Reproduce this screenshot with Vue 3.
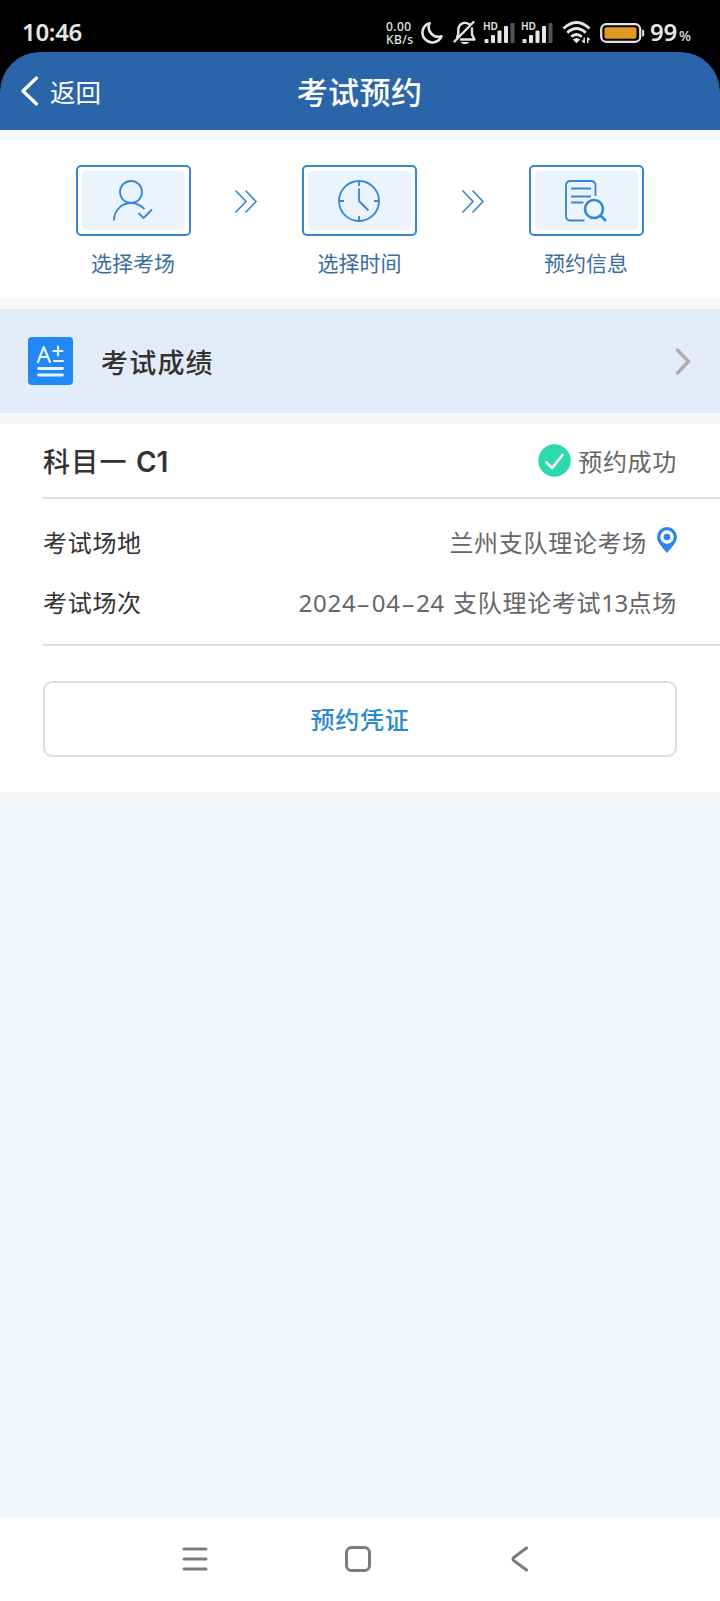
<template>
    <div class="phone">
        <div class="status-bar">
            <span class="clock">10:46</span>
            <div class="status-icons">
                <div class="speed"><span>0.00</span><span>KB/s</span></div>
                <svg class="moon" width="22" height="24" viewBox="0 0 22 24">
                    <path d="M8.6 2.2A9.8 9.8 0 1 0 20.4 15.2A9.6 9.6 0 0 1 8.6 2.2Z" />
                </svg>
                <svg class="bell" width="24" height="25" viewBox="0 0 24 25">
                    <path d="M16.5 4.2C10.5 .8 5.3 4.5 5.3 10V14.5L4 17M19 8.5V14.5L21.5 19.5H8" />
                    <path d="M1.5 21.5L20.5 2" />
                    <path class="fill" d="M7.5 22H16.5Q12 26.5 7.5 22Z" />
                </svg>
                <svg v-for="n in 2" :key="n" class="signal" width="32" height="26" viewBox="0 -4 32 26">
                    <text x="0" y="7.5" textLength="15" lengthAdjust="spacingAndGlyphs">HD</text>
                    <rect x="1.5" y="17" width="4" height="4" rx="1" />
                    <rect x="8" y="13" width="4" height="8" rx="1" />
                    <rect x="14.5" y="8.5" width="4" height="12.5" rx="1" />
                    <rect x="21" y="4" width="4" height="17" rx="1" />
                    <rect class="dim" x="27.5" y="1" width="4" height="20" rx="1" />
                </svg>
                <svg class="wifi" width="30" height="23" viewBox="0 0 30 23">
                    <path d="M1.5 7.5Q14.5 -4.5 27.5 7.5M5.3 11.7Q14.5 3.3 23.7 11.7M9.2 15.8Q14.5 11 19.8 15.8" />
                    <path class="fill" d="M10.8 18.5Q14.5 15.5 18.2 18.5L14.5 22.3Z" />
                    <path class="thin" d="M22.2 16.5V21.5L20.2 19.5M25.7 22V17L27.7 19" />
                </svg>
                <svg class="battery" width="45" height="20" viewBox="0 0 45 20">
                    <rect class="shell" x="1.2" y="1.2" width="39" height="17.6" rx="5" />
                    <rect class="charge" x="4.5" y="4.3" width="32" height="11.4" rx="2" />
                    <path class="tip" d="M42.2 6.5Q44.2 6.5 44.2 8V12Q44.2 13.5 42.2 13.5Z" />
                </svg>
                <span class="level">99</span>
                <span class="percent">%</span>
            </div>
        </div>

        <div class="header-wrap">
            <header class="header">
                <div class="back" @click="goBack">
                    <svg width="18" height="30" viewBox="0 0 18 30">
                        <path d="M15.5 2L2 15L15.5 28" />
                    </svg>
                    <span>返回</span>
                </div>
                <h1>考试预约</h1>
            </header>
        </div>

        <section class="steps">
            <template v-for="(step, index) in steps" :key="step.label">
                <div class="step">
                    <div class="step-box">
                        <div class="step-inner">
                            <svg width="42" height="42" viewBox="0 0 42 42">
                                <template v-if="step.icon === 'user'">
                                    <circle cx="19" cy="12" r="11" />
                                    <path d="M2 40.5C2 30 10 23 19 23C24.5 23 29 25.5 32.5 29M26.5 33L31.5 38L40 29.5" />
                                </template>
                                <template v-else-if="step.icon === 'clock'">
                                    <circle cx="21" cy="21" r="20" />
                                    <path d="M21 1V6M21 36V41M1 21H6M36 21H41M21 8.5V21L30.5 30.5" />
                                </template>
                                <template v-else>
                                    <path d="M30.5 16V5.500Q30.5 1 26 1H5.500Q1 1 1 5.500V36Q1 40.5 5.500 40.500H19.5" />
                                    <path d="M6 8.5H26M6 16.5H26M6 22.5H18.5" />
                                    <circle class="lens" cx="29" cy="29" r="9" />
                                    <path class="lens" d="M35 35L41 41" />
                                </template>
                            </svg>
                        </div>
                    </div>
                    <div class="step-label">{{ step.label }}</div>
                </div>
                <svg v-if="index < steps.length - 1" class="step-arrow" width="22" height="23" viewBox="0 0 22 23">
                    <path d="M1 1L11 11.5L1 22M11 1L21 11.5L11 22" />
                </svg>
            </template>
        </section>

        <section class="score">
            <svg class="score-icon" width="45" height="48" viewBox="0 0 45 48">
                <rect width="45" height="48" rx="4" />
                <path d="M10 25L15.7 10L22 25M12 20H20M30 9.5V18.500M25.5 14H34.5M26 24H35" />
                <path class="thick" d="M10.5 31.5H34.5M10.5 38H34.5" />
            </svg>
            <span class="score-title">考试成绩</span>
            <svg class="score-arrow" width="16" height="27" viewBox="0 0 16 27">
                <path d="M2.5 2L13.500 13.5L2.5 25" />
            </svg>
        </section>

        <section class="card">
            <div class="card-head">
                <span class="subject">科目一 <b>C1</b></span>
                <div class="state">
                    <svg width="33" height="33" viewBox="0 0 33 33">
                        <circle cx="16.5" cy="16.5" r="16.2" />
                        <path d="M8.5 18.5L14.2 24L24.5 11" />
                    </svg>
                    <span>预约成功</span>
                </div>
            </div>
            <div class="card-body">
                <div class="row">
                    <span class="name">考试场地</span>
                    <span class="value">兰州支队理论考场</span>
                    <svg class="pin" width="20" height="26" viewBox="0 0 20 26">
                        <path d="M10 0A10 10 0 0 1 20 10C20 15 15 20 10 26C5 20 0 15 0 10A10 10 0 0 1 10 0Z" />
                        <circle class="ring" cx="10" cy="10" r="5" />
                    </svg>
                </div>
                <div class="row">
                    <span class="name">考试场次</span>
                    <span class="value"><span class="num">2024<i>-</i>04<i>-</i>24</span> 支队理论考试<span class="num tight">13</span>点场</span>
                </div>
            </div>
            <button class="voucher">预约凭证</button>
        </section>

        <nav class="nav-bar">
            <svg width="26" height="26" viewBox="0 0 26 26">
                <path d="M2 3H24M2 13H24M2 23H24" />
            </svg>
            <svg width="26" height="26" viewBox="0 0 26 26">
                <rect x="1.5" y="1.5" width="23" height="23" rx="5" />
            </svg>
            <svg width="26" height="26" viewBox="0 0 26 26">
                <path d="M18.5 2L6 11.2Q4 13 6 14.8L18.5 24" />
            </svg>
        </nav>
    </div>
</template>

<script setup>
import { ref } from 'vue';

const steps = ref([
    { label: '选择考场', icon: 'user' },
    { label: '选择时间', icon: 'clock' },
    { label: '预约信息', icon: 'doc' }
]);

const goBack = () => {
    window.history.back();
}
</script>

<style>
body {
    margin: 0;
    background: #f4f8fa;
}
</style>

<style scoped>
.phone {
    display: flex;
    flex-direction: column;
    width: 720px;
    height: 1601px;
    overflow: hidden;
    background: #f4f8fa;
    font-family: "Noto Sans CJK SC", "Noto Sans", sans-serif;
}

svg {
    display: block;
    flex: none;
    fill: none;
    stroke-linecap: round;
    stroke-linejoin: round;
}

/* status bar */
.status-bar {
    display: flex;
    justify-content: space-between;
    align-items: center;
    height: 52px;
    box-sizing: border-box;
    padding: 13px 28px 0 22px;
    background: #000;
    color: #e6e6e6;
    font-family: "Noto Sans", sans-serif;
}

.clock {
    font-size: 24px;
    font-weight: 600;
    line-height: 37px;
    padding-bottom: 2px;
    letter-spacing: -0.3px;
}

.status-icons {
    display: flex;
    align-items: center;
    stroke: #e6e6e6;
}

.speed {
    display: flex;
    flex-direction: column;
    gap: 1px;
    width: 28px;
    padding-top: 2px;
    font-size: 12px;
    font-weight: 500;
    line-height: 12px;
    letter-spacing: 0.4px;
    white-space: nowrap;
}

.speed span {
    height: 12px;
}

.moon {
    margin-left: 7px;
    stroke-width: 2.6;
}

.bell {
    margin-left: 10px;
    stroke-width: 2.4;
}

.fill {
    fill: #e6e6e6;
    stroke: none;
}

.signal {
    margin: -4px 0 0 6px;
    overflow: visible;
    fill: #e6e6e6;
    stroke: none;
    font-size: 10px;
    font-weight: 600;
}

.dim {
    fill: #555;
}

.wifi {
    margin-left: 9px;
    stroke-width: 2.9;
    stroke-linecap: butt;
}

.thin {
    stroke-width: 1.5;
}

.battery {
    margin-left: 8px;
}

.shell {
    stroke-width: 2.2;
}

.charge {
    fill: #e09a20;
    stroke: none;
}

.tip {
    fill: #e6e6e6;
    stroke: none;
}

.level {
    width: 29px;
    margin-left: 5px;
    padding-bottom: 2px;
    font-size: 24px;
    font-weight: 600;
    line-height: 37px;
    letter-spacing: -0.3px;
}

.percent {
    width: 13px;
    padding-top: 5px;
    font-size: 14px;
    font-weight: 500;
}

/* title bar */
.header-wrap {
    background: #000;
    height: 78px;
}

.header {
    display: grid;
    grid-template-columns: 1fr auto 1fr;
    align-items: center;
    height: 78px;
    box-sizing: border-box;
    padding: 0 22px 0 21px;
    border-radius: 40px 40px 0 0;
    background: #2b65a9;
    color: #fff;
}

.header h1 {
    margin: 0;
    font-size: 31px;
    font-weight: 500;
    line-height: 40px;
    letter-spacing: 0.4px;
}

.back {
    display: flex;
    align-items: center;
    gap: 11px;
    font-size: 25.5px;
    line-height: 36px;
    stroke: #fff;
    stroke-width: 3.2;
}

.back span {
    stroke: none;
}

/* steps */
.steps {
    display: flex;
    justify-content: center;
    align-items: flex-start;
    height: 158px;
    box-sizing: border-box;
    margin-top: 10px;
    padding: 25px 1px 0 0;
    background: #fff;
}

.step-box {
    width: 115px;
    height: 71px;
    box-sizing: border-box;
    padding: 4px;
    border: 2px solid #3787cf;
    border-radius: 5px;
}

.step-inner {
    display: flex;
    justify-content: center;
    align-items: center;
    height: 100%;
    border-radius: 5px;
    background: #ebf3ff;
    stroke: #3787cf;
    stroke-width: 1.8;
}

.step-inner svg {
    margin-right: 1px;
    stroke-linecap: butt;
}

.lens {
    stroke-width: 2.6;
}

.step-label {
    margin-top: 11px;
    color: #3b6c9f;
    font-size: 21px;
    line-height: 30px;
    text-align: center;
}

.step-arrow {
    margin: 25px 45px 0 44.5px;
    stroke: #3787cf;
    stroke-width: 1.7;
}

/* score entry */
.score {
    display: flex;
    align-items: center;
    height: 104px;
    box-sizing: border-box;
    margin-top: 11px;
    padding: 0 29px 0 28px;
    background: #e3edf9;
}

.score-icon {
    stroke: #e3f4ff;
    stroke-width: 2.2;
}

.score-icon rect {
    fill: #2388f5;
    stroke: none;
}

.score-icon .thick {
    stroke-width: 2.8;
}

.score-title {
    flex: 1;
    margin-left: 28px;
    color: #333;
    font-size: 27px;
    font-weight: 500;
    letter-spacing: 1.2px;
}

.score-arrow {
    stroke: #adadad;
    stroke-width: 3.4;
}

/* appointment card */
.card {
    height: 368px;
    box-sizing: border-box;
    margin-top: 11px;
    padding-left: 43px;
    background: #fff;
}

.card-head {
    display: flex;
    justify-content: space-between;
    align-items: center;
    height: 75px;
    box-sizing: border-box;
    padding-right: 43px;
    border-bottom: 2px solid #dedede;
}

.subject {
    color: #333;
    font-size: 27px;
    font-weight: 500;
    letter-spacing: 1.2px;
}

.subject b {
    margin-left: 1px;
    font-family: "Inter", sans-serif;
    font-size: 28px;
    font-weight: 600;
    letter-spacing: 0;
}

.state {
    display: flex;
    align-items: center;
    gap: 7px;
    color: #666;
    font-size: 24px;
    letter-spacing: 0.7px;
}

.state span {
    padding-bottom: 1px;
}

.state circle {
    fill: #2bd9ac;
}

.state path {
    stroke: #fff;
    stroke-width: 2.7;
}

.card-body {
    height: 147px;
    box-sizing: border-box;
    padding: 12px 43px 0 0;
    border-bottom: 2px solid #dedede;
}

.row {
    display: flex;
    align-items: center;
    height: 60px;
    font-size: 24px;
    letter-spacing: 0.7px;
}

.name {
    flex: 1;
    color: #333;
}

.value {
    color: #666;
    white-space: nowrap;
}

.num {
    margin-right: 2px;
    font-family: "Noto Sans", sans-serif;
}

.num.tight {
    margin-right: 0;
    letter-spacing: -0.6px;
}

/* wide dash between the date parts */
.num i {
    display: inline-block;
    width: 15.5px;
    font-style: normal;
    text-align: center;
    transform: scaleX(1.8);
}

.pin {
    margin: -2px 0 0 10px;
    fill: #2a88e8;
}

.ring {
    fill: #2a88e8;
    stroke: #fff;
    stroke-width: 3.4;
}

.voucher {
    display: block;
    width: 634px;
    height: 76px;
    margin-top: 35px;
    padding: 0 0 2px;
    border: 2px solid #dedede;
    border-radius: 9px;
    background: #fff;
    color: #2b8acb;
    font-family: inherit;
    font-size: 24px;
    font-weight: 500;
    letter-spacing: 0.7px;
}

/* system navigation */
.nav-bar {
    display: flex;
    justify-content: center;
    gap: 137px;
    height: 84px;
    box-sizing: border-box;
    margin-top: auto;
    padding: 29px 4px 0 0;
    background: #fff;
    stroke: #7c7c7c;
    stroke-width: 3;
}
</style>
